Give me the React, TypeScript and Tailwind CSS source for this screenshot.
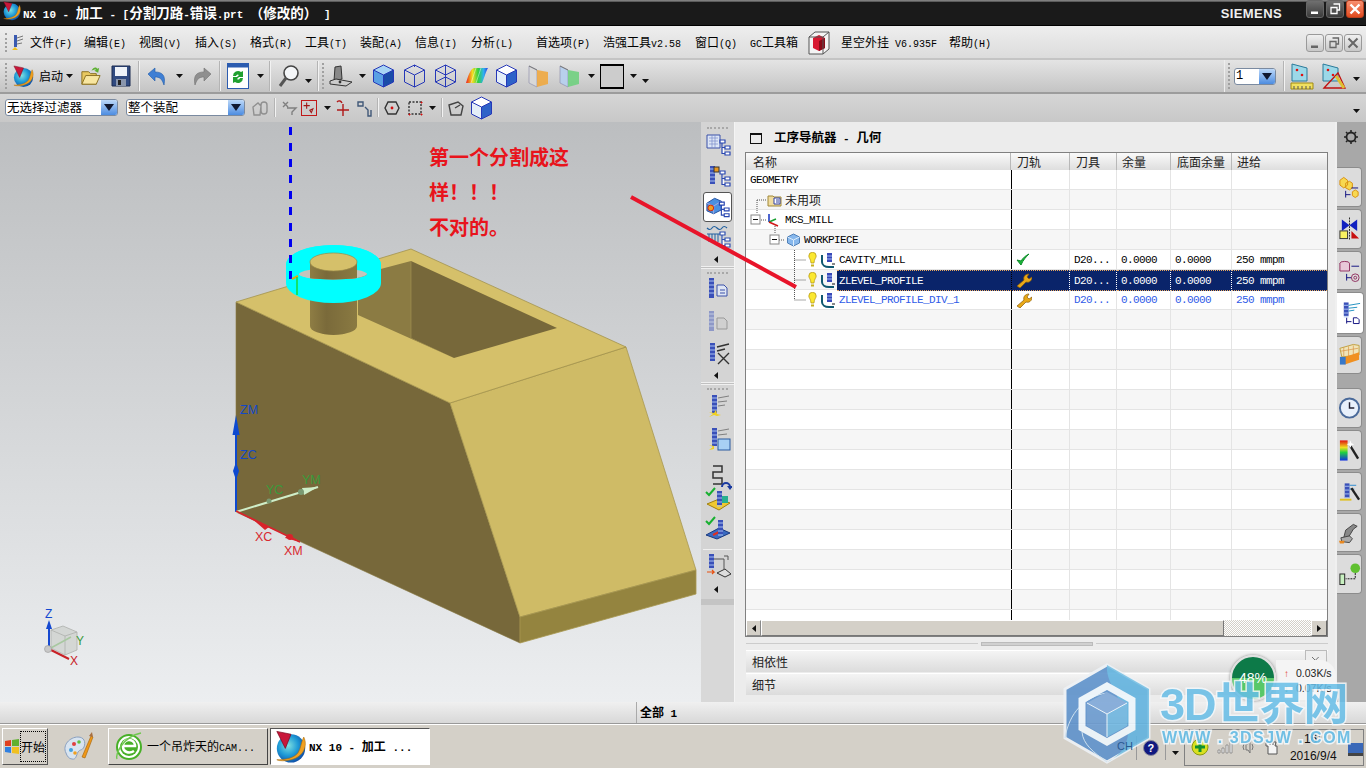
import React from "react";

const CJK = '"Liberation Mono","Noto Sans CJK SC",monospace';
const mixFont = { fontFamily: CJK };

function Mix({ t, latin = "text-[10px]" }: { t: string; latin?: string }) {
  const parts = t.split(/([\x20-\x7e]+)/).filter(Boolean);
  return (
    <>
      {parts.map((p, i) =>
        /^[\x20-\x7e]+$/.test(p) ? (
          <span key={i} className={`${latin} whitespace-pre`}>{p}</span>
        ) : (
          <span key={i} className="font-['Noto_Sans_CJK_SC'] whitespace-pre">{p}</span>
        )
      )}
    </>
  );
}

const Down = ({ className = "" }: { className?: string }) => (
  <svg width="7" height="4" viewBox="0 0 7 4" className={`shrink-0 ${className}`}><path d="M0 0h7L3.5 4z" fill="#111" /></svg>
);
const Grip = ({ className = "" }: { className?: string }) => (
  <div className={`w-[2px] self-stretch my-[3px] shrink-0 border-l-2 border-dotted border-[#a0a0a0] ${className}`} />
);
const Sep = ({ className = "" }: { className?: string }) => (
  <div className={`w-[2px] self-stretch my-[1px] shrink-0 bg-[#f2f2f2] border-l border-[#b4b4b4] ${className}`} />
);

const NX = ({ s = 22, id = "a" }: { s?: number; id?: string }) => (
  <svg width={s} height={s} viewBox="0 0 24 24" className="shrink-0">
    <defs>
      <radialGradient id={`nx${id}`} cx="40%" cy="40%" r="70%"><stop offset="0" stopColor="#7fe0e0" /><stop offset=".5" stopColor="#1e9ad6" /><stop offset="1" stopColor="#0b3d9c" /></radialGradient>
    </defs>
    <circle cx="12" cy="13" r="10" fill={`url(#nx${id})`} />
    <path d="M2 1l10 2-4 10z" fill="#c8173a" stroke="#7a0a20" strokeWidth=".5" />
    <path d="M21 5c3 6 0 14-9 16-4 1-8 1-10 0 6 0 12-1 15-5 2-3 2-7 4-11z" fill="#f0a020" stroke="#a86a08" strokeWidth=".4" />
  </svg>
);
const Folder = () => (
  <svg width="23" height="23" viewBox="0 0 24 24" className="shrink-0">
    <path d="M3 7h7l2 2h6v11H3z" fill="#e8c860" stroke="#8a7020" />
    <path d="M3 20l4-9h15l-4 9z" fill="#f8e6a0" stroke="#8a7020" />
    <path d="M13 6c2-4 5-4 6-2l2-1-1 5-4-2 2-1c-1-1-3 0-5 1z" fill="#5cb030" />
  </svg>
);
const Floppy = () => (
  <svg width="20" height="22" viewBox="0 0 20 22" className="shrink-0">
    <path d="M1 1h18v20H1z" fill="#304a80" stroke="#1a2a50" />
    <path d="M4 2h12v9H4z" fill="#eef2f8" />
    <path d="M5 14h10v7H5z" fill="#8a96ac" /><path d="M7 15h3v5H7z" fill="#222" />
  </svg>
);
const Undo = ({ gray = false }: { gray?: boolean }) => (
  <svg width="22" height="22" viewBox="0 0 22 22" className={`shrink-0 ${gray ? "-scale-x-100" : ""}`}>
    <path d="M2 9l7-6v4c7 0 11 3 9 13-2-6-4-8-9-8v4z" fill={gray ? "#8f8f8f" : "#3f7fd4"} stroke={gray ? "#707070" : "#205aa8"} strokeWidth=".6" />
  </svg>
);
const Update = () => (
  <svg width="22" height="26" viewBox="0 0 22 26" className="shrink-0">
    <rect x=".5" y=".5" width="21" height="25" fill="#fff" stroke="#2c5cb0" /><rect x=".5" y=".5" width="21" height="4" fill="#2c5cb0" />
    <path d="M6 13a5 5 0 018-4l2-1v6h-6l2-2a2 2 0 00-3 1zM16 15a5 5 0 01-8 4l-2 1v-6h6l-2 2a2 2 0 003-1z" fill="#20a030" />
  </svg>
);
const Magnify = () => (
  <svg width="22" height="24" viewBox="0 0 22 24" className="shrink-0">
    <circle cx="13" cy="9" r="7" fill="#f4f6f8" stroke="#444" strokeWidth="1.6" />
    <path d="M8 14l-6 8" stroke="#555" strokeWidth="3" />
  </svg>
);
const Render = () => (
  <svg width="24" height="24" viewBox="0 0 24 24" className="shrink-0">
    <path d="M6 3l6-1 1 13-8 2z" fill="#888" stroke="#333" />
    <path d="M1 17l6-2 16 3-6 4-16-2z" fill="#ccc" stroke="#333" />
    <circle cx="11" cy="18" r="1.4" fill="#333" />
  </svg>
);
const Cube = ({ v }: { v: "shade" | "wire" | "dense" | "edge" }) => {
  const s = "#2638b8";
  return (
    <svg width="23" height="24" viewBox="0 0 23 24" className="shrink-0">
      {v === "shade" && <><path d="M11.5 1l10 5-10 5-10-5z" fill="#a8d4f4" /><path d="M1.5 6l10 5v12l-10-5z" fill="#5aa0e4" /><path d="M21.5 6l-10 5v12l10-5z" fill="#1a4ca8" /></>}
      {v === "edge" && <><path d="M11.5 1l10 5-10 5-10-5z" fill="#ffffff" /><path d="M1.5 6l10 5v12l-10-5z" fill="#e4eef8" /><path d="M21.5 6l-10 5v12l10-5z" fill="#2e62c8" /></>}
      <path d="M11.5 1l10 5v12l-10 5-10-5V6zM1.5 6l10 5 10-5M11.5 11v12" fill="none" stroke={s} strokeWidth="1" />
      {v === "dense" && <path d="M11.5 1v12M1.5 18l10-5 10 5" fill="none" stroke={s} strokeWidth="1" />}
      {v === "wire" && <path d="M11.5 1v2" fill="none" stroke={s} />}
    </svg>
  );
};
const Rainbow = () => (
  <svg width="24" height="22" viewBox="0 0 24 22" className="shrink-0">
    <defs><linearGradient id="rb" x1="0" x2="1"><stop offset="0" stopColor="#f02020" /><stop offset=".3" stopColor="#f0e020" /><stop offset=".55" stopColor="#30d040" /><stop offset=".8" stopColor="#30b0f0" /><stop offset="1" stopColor="#3040e0" /></linearGradient></defs>
    <path d="M1 18C4 8 6 4 9 3l14 0c-2 3-3 8-6 15z" fill="url(#rb)" />
    <path d="M6 18l5-15M11 18l5-15" stroke="#fff" strokeWidth=".7" opacity=".6" />
  </svg>
);
const Paper = ({ green = false }: { green?: boolean }) => (
  <svg width="22" height="26" viewBox="0 0 22 26" className="shrink-0">
    <path d="M2 3l8 4v17l-8-4z" fill={green ? "#b8d0ec" : "#d8d8d8"} stroke="#88a" strokeWidth=".6" />
    <path d="M10 7l11 2v12l-11 3z" fill={green ? "#70d080" : "#f0a840"} opacity=".9" />
    <path d="M2 3l8 4" stroke="#777" />
  </svg>
);
const Combo = ({ t, className = "" }: { t: string; className?: string }) => (
  <div className={`h-[17px] bg-white border border-[#7a8aa0] rounded-[3px] flex items-center shrink-0 overflow-hidden ${className}`}>
    <span className="flex-1 pl-[1px] text-[12.5px] leading-none text-black font-['Noto_Sans_CJK_SC'] whitespace-nowrap">{t}</span>
    <span className="w-[16px] h-full bg-gradient-to-b from-[#bcd8f8] to-[#4c8ce0] flex items-center justify-center">
      <svg width="10" height="7" viewBox="0 0 10 7"><path d="M0 0h10L5 7z" fill="#101830" /></svg>
    </span>
  </div>
);
const Plain = ({ d, c = "#555", s = 18, className = "", dash, children }: { d: string; c?: string; s?: number; className?: string; dash?: string; children?: React.ReactNode }) => (
  <svg width={s} height={s} viewBox="0 0 18 18" className={`shrink-0 ${className}`}><path d={d} fill="none" stroke={c} strokeWidth="1.4" strokeDasharray={dash} />{children}</svg>
);
const WinBtn = ({ k, dark = false, close = false }: { k: "min" | "max" | "x"; dark?: boolean; close?: boolean }) => {
  const bg = close ? "bg-gradient-to-b from-[#f89070] to-[#e04818] border-[#b84020]" : dark ? "bg-gradient-to-b from-[#707070] to-[#3c3c3c] border-[#666]" : "bg-gradient-to-b from-[#f0f0f0] to-[#c8c8c8] border-[#9a9a9a]";
  const c = dark || close ? "#fff" : "#666";
  return (
    <div className={`w-[18px] h-[18px] rounded-[3px] border flex items-center justify-center ${bg}`}>
      <svg width="14" height="14" viewBox="0 0 14 14">
        {k === "min" && <path d="M3 9.5h7v2.5H3z" fill={c} />}
        {k === "max" && <path d="M5.5 2h6v6h-2M3 5.5h6v6H3z" fill="none" stroke={c} strokeWidth="1.3" />}
        {k === "x" && <path d="M2.5 2.5l9 9M11.5 2.5l-9 9" stroke={c} strokeWidth={close ? 2.4 : 2} />}
      </svg>
    </div>
  );
};

const menu: [string, string][] = [
  ["文件(F)", "ml-[6px] w-[54px]"], ["编辑(E)", "w-[55px]"], ["视图(V)", "w-[56px]"], ["插入(S)", "w-[55px]"], ["格式(R)", "w-[55px]"],
  ["工具(T)", "w-[55px]"], ["装配(A)", "w-[55px]"], ["信息(I)", "w-[56px]"], ["分析(L)", "w-[65px]"], ["首选项(P)", "w-[67px]"], ["浩强工具v2.58", "w-[92px]"], ["窗口(Q)", "w-[55px]"], ["GC工具箱", "w-[60px]"],
];

const MenuBar = () => (
  <div style={mixFont} className="h-[34px] shrink-0 flex items-center pl-[5px] pt-[1px] text-[12px] text-black bg-gradient-to-b from-[#eeeeee] to-[#dcdcdc] border-b-2 border-[#c4c4c4]">
    <Grip className="my-[6px]" />
    <svg width="16" height="20" viewBox="0 0 16 20" className="ml-[1px] shrink-0"><path d="M6 2h3v12H6z" fill="#3a5ab0" /><path d="M9 5l6-2M9 8l6-2M9 11l5-1" stroke="#777" /><path d="M7 14l-3 3 6 0z" fill="#f0c020" /></svg>
    {menu.map(([t, c]) => <div key={t} className={`${c} shrink-0 whitespace-nowrap`}><Mix t={t} /></div>)}
    <svg width="22" height="24" viewBox="0 0 22 24" className="shrink-0 -ml-[2px]">
      <path d="M1 6l6-5h14v17l-6 5H1z" fill="#f4f4f4" stroke="#555" /><path d="M5 7l6-3 6 3v10l-6 3-6-3z" fill="#d81830" /><path d="M11 10v10l6-3V7z" fill="#8a0a18" /><path d="M1 6h14v17M15 6l6-5" fill="none" stroke="#555" />
    </svg>
    <div className="ml-[11px] w-[108px] shrink-0 whitespace-nowrap"><Mix t="星空外挂 V6.935F" /></div>
    <div className="shrink-0"><Mix t="帮助(H)" /></div>
    <div className="ml-auto mr-[4px] flex gap-[1px]"><WinBtn k="min" /><WinBtn k="max" /><WinBtn k="x" /></div>
  </div>
);

const Toolbar1 = () => (
  <div className="h-[34px] shrink-0 flex items-center bg-gradient-to-b from-[#e4e4e4] to-[#c4c4c4] border-b-2 border-[#9c9c9c] pl-[5px]">
    <Grip />
    <div className="ml-[5px]"><NX id="t" s={23} /></div>
    <span className="ml-[4px] w-[24px] text-[12px] text-black font-['Noto_Sans_CJK_SC'] shrink-0">启动</span>
    <Down className="ml-[3px]" />
    <div className="ml-[6px]"><Folder /></div>
    <div className="ml-[9px]"><Floppy /></div>
    <Sep className="ml-[7px]" />
    <div className="ml-[6px]"><Undo /></div>
    <Down className="ml-[8px]" />
    <div className="ml-[8px]"><Undo gray /></div>
    <Sep className="ml-[6px]" />
    <div className="ml-[6px]"><Update /></div>
    <Down className="ml-[8px]" />
    <Sep className="ml-[5px]" />
    <div className="ml-[7px]"><Magnify /></div>
    <Down className="ml-[5px] mt-[10px]" />
    <Sep className="ml-[5px]" />
    <Grip className="ml-[3px]" />
    <div className="ml-[5px]"><Render /></div>
    <Down className="ml-[6px]" />
    <div className="ml-[6px]"><Cube v="shade" /></div>
    <div className="ml-[8px]"><Cube v="wire" /></div>
    <div className="ml-[8px]"><Cube v="dense" /></div>
    <div className="ml-[8px]"><Rainbow /></div>
    <div className="ml-[6px]"><Cube v="edge" /></div>
    <div className="ml-[9px]"><Paper /></div>
    <div className="ml-[9px]"><Paper green /></div>
    <Down className="ml-[8px]" />
    <div className="ml-[5px] w-[24px] h-[25px] bg-[#cccccc] border-2 border-black border-x-[1.5px] shrink-0" />
    <Down className="ml-[6px]" />
    <Down className="ml-[5px] mt-[10px]" />
    <div className="ml-auto flex items-center h-full shrink-0 border-l border-[#eee]">
      <Grip className="ml-[3px]" />
      <div className="ml-[4px] w-[42px] h-[17px] bg-white border border-[#7a8aa0] rounded-[3px] flex items-center overflow-hidden">
        <span className="flex-1 pl-[1px] text-[12px] font-['Liberation_Mono'] text-black">1</span>
        <span className="w-[16px] h-full bg-gradient-to-b from-[#bcd8f8] to-[#4c8ce0] flex items-center justify-center"><svg width="10" height="7" viewBox="0 0 10 7"><path d="M0 0h10L5 7z" fill="#101830" /></svg></span>
      </div>
      <Sep className="ml-[7px]" />
      <svg width="26" height="28" viewBox="0 0 26 28" className="ml-[4px] shrink-0"><path d="M3 2l15 4v13H3z" fill="#9cd8e8" stroke="#2a7a9a" /><circle cx="8" cy="8" r="1.3" fill="#e01010" /><circle cx="13" cy="13" r="1.3" fill="#e01010" /><path d="M2 21h22v6H2z" fill="#f0e060" stroke="#a08a10" /><path d="M5 24v3M9 24v3M13 24v3M17 24v3M21 24v3" stroke="#555" /></svg>
      <svg width="26" height="28" viewBox="0 0 26 28" className="ml-[6px] shrink-0"><path d="M2 2l15 4v13H2z" fill="#9cd8e8" stroke="#2a7a9a" /><circle cx="7" cy="8" r="1.3" fill="#e01010" /><circle cx="12" cy="13" r="1.3" fill="#e01010" /><path d="M3 26l14-15 7 15z" fill="none" stroke="#c01010" strokeWidth="1.3" /><path d="M15 14l8 12" stroke="#e0c030" strokeWidth="3" /></svg>
      <Down className="ml-[6px] mr-[6px] mt-[6px]" />
    </div>
  </div>
);

const Toolbar2 = () => (
  <div className="h-[28px] shrink-0 flex items-center bg-gradient-to-b from-[#d6d6d6] to-[#c8c8c8] pl-[5px] pb-[1px]">
    <Combo t="无选择过滤器" className="w-[113px]" />
    <Combo t="整个装配" className="w-[119px] ml-[8px]" />
    <Plain className="ml-[6px]" c="#909090" d="M2 8l5-4 3 3-1 9H3zM10 6a3 3 0 116 0v6a3 3 0 11-6 0z" />
    <Sep className="ml-[5px] my-[4px]" />
    <Plain className="ml-[4px]" c="#808080" d="M3 3l5 5M8 3L3 8M7 9h9l-4 4v3" />
    <div className="ml-[3px] w-[16px] h-[16px] border border-[#c01818] flex items-center justify-center shrink-0"><Plain s={14} c="#a01818" d="M6 2v8M2 6h8M10 12l4-2-2 5z" /></div>
    <Down className="ml-[7px]" />
    <Plain className="ml-[3px]" c="#b01818" d="M9 5v12M3 11h12M3 3c2-2 4-1 5 1" />
    <Plain className="ml-[3px]" c="#405878" d="M3 3h5v4H3zM10 8l3 3v6h3v-6" />
    <Sep className="ml-[4px] my-[4px]" />
    <Plain className="ml-[4px]" c="#333" d="M5 3h8l3 6-3 6H5L2 9z"><circle cx="9" cy="9" r="1.4" fill="#d01010" /></Plain>
    <Plain className="ml-[5px]" c="#333" d="M3 3h12v12H3z" dash="2 1.5"><path d="M15 3h1v1h-1zM15 15h1v1h-1zM3 15h1v1H3z" fill="#d01010" stroke="#d01010" /></Plain>
    <Down className="ml-[5px]" />
    <Sep className="ml-[5px] my-[4px]" />
    <Plain className="ml-[4px]" c="#444" d="M2 6l9-3 5 4-2 9-10 0zM8 9l5-3" />
    <div className="ml-[5px] flex"><Cube v="edge" /></div>
    <Down className="ml-auto mr-[6px] mt-[6px]" />
  </div>
);

const Viewport = () => (
  <svg className="block shrink-0" width="701" height="580" viewBox="0 122 701 580">
    <defs>
      <linearGradient id="bg" x1="0" y1="0" x2="0" y2="1"><stop offset="0" stopColor="#bcbec0" /><stop offset="1" stopColor="#eceef0" /></linearGradient>
      <linearGradient id="cyl" x1="0" x2="1"><stop offset="0" stopColor="#8e7d44" /><stop offset=".35" stopColor="#7a6a3a" /><stop offset="1" stopColor="#8a7a42" /></linearGradient>
      <clipPath id="hole"><ellipse cx="333" cy="274" rx="34" ry="5.5" /></clipPath>
      <filter id="bl"><feGaussianBlur stdDeviation=".35" /></filter>
    </defs>
    <rect x="0" y="122" width="701" height="580" fill="url(#bg)" />
    <path d="M236 302L450 403 520 617V643L236 512z" fill="#77683a" stroke="#8a7b44" strokeWidth=".6" />
    <path d="M450 403L626 347 696 570 520 617z" fill="#cfbb66" stroke="#a89850" strokeWidth=".8" />
    <path d="M520 617L696 570V594L520 643z" fill="#94843f" stroke="#a89850" strokeWidth=".8" />
    <path d="M236 302L411 249 626 347 450 403z" fill="#d5c06a" stroke="#a3934d" strokeWidth=".8" />
    <path d="M358 275L411 261V338L454 358 358 315z" fill="#8b7b43" />
    <path d="M411 261L557 328 454 358 411 338z" fill="#77683a" />
    <path d="M411 261V338" stroke="#a09050" strokeWidth=".7" />
    <path d="M310 262V326A23.5 9 0 00357 326V262z" fill="url(#cyl)" />
    <path d="M286 265A47.5 20 0 01381 265V283A47.5 20 0 01286 283zM299 274A34 5.5 0 00367 274 34 5.5 0 00299 274z" fill="#00ffff" fillRule="evenodd" />
    <path d="M286 265A47.5 20 0 01381 265V274H286z" fill="#00ffff" />
    <path d="M299 274A34 5.5 0 00367 274H299z" fill="#c4c4bc" />
    <path d="M299 274A34 5.500 0 01367 274z" fill="#c4c4bc" />
    <path d="M310 262V285H357V262z" fill="url(#cyl)" clipPath="url(#hole)" />
    <path d="M310 262V271H357V262z" fill="url(#cyl)" />
    <ellipse cx="333.500" cy="262" rx="23.500" ry="9" fill="#d5c06a" stroke="#9a8a48" strokeWidth=".7" />
    <path d="M290.500 127V280" stroke="#0000f0" strokeWidth="3" strokeDasharray="8 8" />
    <path d="M298 276l-6 3" stroke="#e8a810" strokeWidth="2" /><path d="M297 277v18" stroke="#18d838" strokeWidth="1.500" />

    <g filter="url(#bl)">
      <path d="M236 512V430" stroke="#0a4ad0" strokeWidth="2" />
      <path d="M236 415l-3.500 20h7zM236 462l-3 9 3 9 3-9z" fill="#0a4ad0" />
      <path d="M236 512l82-25" stroke="#cfeec8" strokeWidth="2" />
      <path d="M318 487l-16 1 2 7z" fill="#cfeec8" /><circle cx="301" cy="492" r="3" fill="#7a9a72" /><circle cx="269" cy="501" r="2.500" fill="#7a9a72" />
      <path d="M236 511l64 31" stroke="#d8242c" strokeWidth="1.800" />
      <path d="M250 517l19 10-4 3zM300 542l-12-8-3 4z" fill="#d8242c" /><circle cx="290" cy="537" r="3" fill="#d8242c" />
    </g>
    <g fontFamily="'Liberation Sans',sans-serif" fontSize="12.500">
      <text x="240" y="414" fill="#1248c8">ZM</text><text x="240" y="459" fill="#1248c8">ZC</text>
      <text x="266" y="494" fill="#3a9a3a">YC</text><text x="302" y="484" fill="#3a9a3a">YM</text>
      <text x="255" y="541" fill="#d82830">XC</text><text x="284" y="555" fill="#d82830">XM</text>
    </g>
    <g filter="url(#bl)">
      <path d="M51 630l12-4 14 6v18l-12 5-14-7z" fill="#c9ccc8" fillOpacity=".65" stroke="#adb0ac" strokeWidth=".8" />
      <path d="M51 630l14 6 12-4M65 636v19" fill="none" stroke="#adb0ac" strokeWidth=".8" />
      <path d="M49 649l22-12" stroke="#a8c8a0" strokeWidth="1.500" />
      <path d="M49 649V628" stroke="#1248d0" strokeWidth="2" /><path d="M49 620l-3 9h6z" fill="#1248d0" />
      <path d="M49 649l20 10" stroke="#c82028" strokeWidth="2" /><circle cx="48" cy="649" r="3.500" fill="#c8c8c8" stroke="#999" strokeWidth=".6" />
    </g>
    <g fontFamily="'Liberation Sans',sans-serif" fontSize="12">
      <text x="45" y="618" fill="#1248d0">Z</text><text x="76" y="645" fill="#3a9a3a">Y</text><text x="70" y="665" fill="#c82028">X</text>
    </g>
  </svg>
);

const Tree = ({ c = "#2846b0" }: { c?: string }) => (
  <path d="M16 9h5v3h-5zM21 15h5v3h-5zM21 21h5v3h-5zM18 12v10.500h3M18 16.500h3" fill="#fff" stroke={c} strokeWidth="1.200" />
);
const Mill = ({ x = 6, y = 2, h = 17, o = 1 }: { x?: number; y?: number; h?: number; o?: number }) => (
  <g opacity={o}><rect x={x} y={y} width="5" height={h} fill="#3a50b8" /><path d={`M${x} ${y + 3}h5M${x} ${y + 7}h5M${x} ${y + 11}h5M${x} ${y + 15}h5`} stroke="#a8c0f0" strokeWidth="1" /></g>
);
const SI = ({ children, h = "h-[30px]", sel = false }: { children: React.ReactNode; h?: string; sel?: boolean }) => (
  <div className={`${h} shrink-0 flex items-center justify-center ${sel ? "bg-white border border-[#555] rounded-[3px] mx-[2px]" : ""}`}>
    <svg width="28" height="28" viewBox="0 0 28 28">{children}</svg>
  </div>
);
const SGrip = () => <div className="h-[2px] shrink-0 mx-[6px] border-t-2 border-dotted border-[#a8a8a8] mt-[3px]" />;
const Coll = () => (
  <div className="h-[14px] shrink-0 flex items-center pl-[13px]"><svg width="4" height="7" viewBox="0 0 4 7"><path d="M4 0v7L0 3.500z" fill="#111" /></svg></div>
);

const LeftStrip = () => (
  <div className="w-[34px] shrink-0 flex flex-col bg-[#d4d4d4] border-r border-[#f4f4f4] pt-[2px]">
    <SGrip />
    <SI h="h-[31px]"><path d="M3 4h13v13H3z" fill="#dde6f6" stroke="#3a50a8" /><path d="M5 7h9M5 10h9M5 13h9M8 4v13M11 4v13" stroke="#7a8ac8" strokeWidth=".7" /><Tree /></SI>
    <SI h="h-[32px]"><Mill x={6} y={4} h={18} /><rect x="10" y="5" width="5" height="5" fill="#e89820" stroke="#333" /><Tree /></SI>
    <SI sel h="h-[30px]"><path d="M3 10l8-5 7 3v9l-8 4-7-3z" fill="#4a90e0" stroke="#2450a0" /><path d="M3 10l7 3 8-5M10 13v8" stroke="#aad" fill="none" /><circle cx="7" cy="15" r="3" fill="#f0a020" stroke="#d02010" /><Tree /></SI>
    <SI h="h-[30px]"><path d="M3 5q3 3 5 0t5 0 5 0 5 0" fill="none" stroke="#2060a0" strokeWidth="1.200" /><path d="M3 11h14M5 11v8M8 11v8M11 11v8M14 11v8" stroke="#2060a0" /><Tree c="#3050b0" /></SI>
    <Coll />
    <div className="h-[3px] shrink-0 border-t border-b border-[#f0f0f0] bg-[#c0c0c0]" />
    <SGrip />
    <SI h="h-[30px]"><Mill x={5} y={3} h={20} /><path d="M13 10h7l3 3v8H13z" fill="#dfe6f4" stroke="#3a50a8" /><path d="M16 15h5M16 18h5" stroke="#3a50a8" /></SI>
    <SI h="h-[35px]"><Mill x={5} y={3} h={20} o={0.45} /><path d="M13 10h7l3 3v8H13z" fill="#d0d0d0" stroke="#999" /></SI>
    <SI h="h-[29px]"><Mill x={6} y={3} h={18} /><path d="M13 7l12-3M13 11l8-2M14 24l11-11M14 13l11 11" stroke="#333" strokeWidth="1.400" /></SI>
    <Coll />
    <div className="h-[3px] shrink-0 border-t border-b border-[#f0f0f0] bg-[#c0c0c0]" />
    <SGrip />
    <SI h="h-[31px]"><Mill x={8} y={3} h={18} /><path d="M14 6l11-2M14 10l9-1M14 14l7-1" stroke="#808080" /><path d="M10 23l-5 2 4-3-4-2 5 1 2-3 1 4 4 1-4 1z" fill="#f0d020" /></SI>
    <SI h="h-[35px]"><Mill x={8} y={3} h={18} /><path d="M14 6l11-2M14 10l9-1" stroke="#808080" /><rect x="14" y="14" width="12" height="11" fill="#a8d0f4" stroke="#2a5aa0" /><path d="M10 24l-5 1 4-3-4-2 5 1z" fill="#f0d020" /></SI>
    <SI h="h-[42px]"><path d="M9 3h9v6H9v6h9v6H9" fill="none" stroke="#333" strokeWidth="1.500" /><path d="M18 24a4 4 0 018 0" fill="none" stroke="#1a3aa0" strokeWidth="2" /><path d="M26 27l-3-4h6z" fill="#1a3aa0" /></SI>
    <SI h="h-[22px] -mt-[10px]"><path d="M2 7l3 3 6-7" stroke="#18b030" strokeWidth="2" fill="none" /><path d="M3 19l12-5 11 4-11 7z" fill="#f0c830" stroke="#a08010" /><Mill x={13} y={6} h={14} /><path d="M18 11h6v7h-6z" fill="#28b090" /></SI>
    <SI h="h-[36px]"><path d="M2 7l3 3 6-7" stroke="#18b030" strokeWidth="2" fill="none" /><path d="M2 21l13-7 11 5-13 6z" fill="#3a6ac0" stroke="#1a3a80" /><path d="M9 21l8-4" stroke="#e03020" strokeWidth="2" /><Mill x={14} y={6} h={14} /></SI>
    <div className="h-[1px] shrink-0 bg-[#f0f0f0] mx-[2px] mt-[3px]" />
    <SI h="h-[32px]"><Mill x={5} y={2} h={14} /><path d="M10 7h10v10M20 4h4v4" fill="none" stroke="#555" /><path d="M13 21l8-4 6 5-6 3z" fill="#ddd" stroke="#333" /><path d="M3 20h7l-2-2m2 2l-2 2" fill="none" stroke="#e85010" strokeWidth="1.200" /></SI>
    <Coll />
    <div className="h-[6px] shrink-0 bg-[#c4c4c4] mt-[3px]" />
    <div className="flex-1 bg-[#d8d8d8]" />
  </div>
);

const Wrench = () => (
  <svg width="16" height="16" viewBox="0 0 16 16"><path d="M1 14l7-6c-1-3 1-6 5-6l-2 3 2 2 3-2c0 4-3 6-6 5l-6 6z" fill="#e8a818" stroke="#8a5c08" strokeWidth=".7" /></svg>
);
const Bulb = () => (
  <svg width="9" height="16" viewBox="0 0 9 16" className="shrink-0"><path d="M.8 4a3.700 3.700 0 017.400 0c0 2-2 3-2.200 7H3C2.800 7 .8 6 .8 4z" fill="#fbe830" stroke="#b09010" strokeWidth=".7" /><path d="M3 12.500h3v2H3z" fill="#c8b020" /></svg>
);
const OpIcon = () => (
  <svg width="15" height="16" viewBox="0 0 15 16" className="shrink-0 ml-[4px]"><path d="M1 3v7c0 3 3 5 7 5h5" fill="none" stroke="#105870" strokeWidth="2" /><rect x="6" y="1" width="5" height="9" fill="#3848b8" /><path d="M6 4h5M6 7h5" stroke="#a0b8f0" /><path d="M11 12h3" stroke="#111" /></svg>
);

const cols = "grid grid-cols-[265px_59px_47px_54px_61px_95px]";
type Row = { kind: "geo" | "unused" | "mcs" | "wp" | "op" | "empty"; name?: string; state?: "ok" | "wrench"; sel?: boolean; blue?: boolean };
const rows: Row[] = [
  { kind: "geo" }, { kind: "unused" }, { kind: "mcs" }, { kind: "wp" },
  { kind: "op", name: "CAVITY_MILL", state: "ok" },
  { kind: "op", name: "ZLEVEL_PROFILE", state: "wrench", sel: true },
  { kind: "op", name: "ZLEVEL_PROFILE_DIV_1", state: "wrench", blue: true },
  ...Array.from({ length: 16 }, (): Row => ({ kind: "empty" })),
];
const mono = "font-['Liberation_Mono'] text-[11px] tracking-[-0.6px] whitespace-pre pt-[2px]";

const First = ({ r }: { r: Row }) => {
  if (r.kind === "geo") return <div className={`pl-[4px] flex items-center h-full ${mono}`}>GEOMETRY</div>;
  if (r.kind === "unused") return (
    <div className="pl-[21px] flex items-center h-full">
      <svg width="15" height="14" viewBox="0 0 15 14" className="shrink-0"><path d="M1 3h5l1 1h7v9H1z" fill="#f0dca0" stroke="#a08838" /><path d="M7 5h6v6H7z" fill="#fff" stroke="#3040a0" /><path d="M9 7h3M9 9h3" stroke="#3040a0" /></svg>
      <span className="ml-[3px] text-[12px] leading-none font-['Noto_Sans_CJK_SC'] text-[#222]">未用项</span>
    </div>
  );
  if (r.kind === "mcs") return (
    <div className="pl-[21px] flex items-center h-full">
      <svg width="15" height="16" viewBox="0 0 15 16" className="shrink-0"><path d="M2 10V2" stroke="#1030c0" strokeWidth="1.500" /><path d="M2 10l7-3" stroke="#18a030" strokeWidth="1.500" /><path d="M2 10l9 4" stroke="#d01818" strokeWidth="1.500" /></svg>
      <span className={`ml-[3px] ${mono}`}>MCS_MILL</span>
    </div>
  );
  if (r.kind === "wp") return (
    <div className="pl-[40px] flex items-center h-full">
      <svg width="15" height="14" viewBox="0 0 15 14" className="shrink-0"><path d="M7.500 1l6 3v6l-6 3-6-3V4z" fill="#88b8ec" stroke="#5080b8" /><path d="M1.500 4l6 3 6-3M7.500 7v6" fill="none" stroke="#dcecfa" /></svg>
      <span className={`ml-[3px] ${mono}`}>WORKPIECE</span>
    </div>
  );
  if (r.kind === "op") return (
    <div className="pl-[62px] flex items-center h-full">
      <Bulb /><OpIcon />
      <span className={`ml-[1px] pl-[2px] flex-1 h-full flex items-center ${mono} ${r.sel ? "bg-[#0a246a] text-white border-y border-dotted border-[#e8a860]" : r.blue ? "text-[#2f5ce8]" : "text-black"}`}>{r.name}</span>
    </div>
  );
  return null;
};

const Table = () => (
  <div className="ml-[10px] w-[583px] h-[485px] border border-[#808080] bg-white shrink-0 flex flex-col overflow-hidden">
    <div className={`${cols} h-[17px] shrink-0 bg-gradient-to-b from-[#fafafa] to-[#dedede] text-[12px] leading-[17px] font-['Noto_Sans_CJK_SC'] text-[#222]`}>
      <div className="pl-[7px] border-r border-[#b8b8b8]">名称</div>
      <div className="pl-[6px] border-r border-[#b8b8b8]">刀轨</div>
      <div className="pl-[6px] border-r border-[#b8b8b8]">刀具</div>
      <div className="pl-[5px] border-r border-[#b8b8b8]">余量</div>
      <div className="pl-[6px] border-r border-[#b8b8b8]">底面余量</div>
      <div className="pl-[5px]">进给</div>
    </div>
    <div className="relative h-[450px] shrink-0 overflow-hidden">
      {rows.map((r, i) => {
        const hasData = r.kind === "op";
        const tone = r.sel ? "bg-[#0a246a] text-white border-y border-dotted border-[#e8a860]" : r.blue ? "text-[#2f5ce8]" : "text-black";
        const line = r.sel ? "border-r border-r-white" : "border-r border-r-[#e4e4e4]";
        return (
          <div key={i} className={`${cols} h-[20px] border-b border-[#e4e4e4] ${i % 2 ? "bg-[#f6f6f6]" : "bg-white"}`}>
            <div className="h-full"><First r={r} /></div>
            <div className={`border-l border-black flex items-center pl-[4px] ${line} ${r.sel ? "bg-[#0a246a] border-y border-dotted border-y-[#e8a860]" : ""}`}>
              {r.state === "ok" && <svg width="14" height="13" viewBox="0 0 14 13"><path d="M1 7l4 5c2-5 5-8 8-11-4 2-6 4-8 7z" fill="#18b838" stroke="#0c8a28" strokeWidth="1" /></svg>}
              {r.state === "wrench" && <Wrench />}
            </div>
            <div className={`${line} ${mono} pl-[4px] flex items-center ${hasData ? tone : ""}`}>{hasData ? "D20..." : ""}</div>
            <div className={`${line} ${mono} pl-[4px] flex items-center ${hasData ? tone : ""}`}>{hasData ? "0.0000" : ""}</div>
            <div className={`${line} ${mono} pl-[4px] flex items-center ${hasData ? tone : ""}`}>{hasData ? "0.0000" : ""}</div>
            <div className={`${mono} pl-[4px] flex items-center ${hasData ? tone : ""}`}>{hasData ? "250 mmpm" : ""}</div>
          </div>
        );
      })}
      <svg className="absolute left-0 top-0 pointer-events-none" width="70" height="140" viewBox="746 170 70 140">
        <path d="M757 200h10M757 200v14M761 220h6M775 226v8M779 240h6M794.500 250v50M794.500 260h12M794.500 280h12M794.500 300h12" fill="none" stroke="#555" strokeDasharray="1 1" />
        <rect x="751" y="215" width="9" height="9" fill="#fff" stroke="#888" /><path d="M753 219.500h5" stroke="#111" />
        <rect x="770" y="235" width="9" height="9" fill="#fff" stroke="#888" /><path d="M772 239.500h5" stroke="#111" />
      </svg>
    </div>
    <div className="h-[16px] shrink-0 flex bg-[repeating-conic-gradient(#d4d0c8_0_25%,#ffffff_0_50%)] bg-[length:2px_2px]">
      <div className="w-[15px] bg-[#d4d0c8] border border-[#888] border-t-white border-l-white flex items-center justify-center"><svg width="4" height="7" viewBox="0 0 4 7"><path d="M4 0v7L0 3.500z" fill="#111" /></svg></div>
      <div className="w-[463px] bg-[#d4d0c8] border border-[#777] border-t-white border-l-white" />
      <div className="flex-1" />
      <div className="w-[16px] bg-[#d4d0c8] border border-[#666] border-t-white border-l-white flex items-center justify-center"><svg width="4" height="7" viewBox="0 0 4 7"><path d="M0 0v7L4 3.500z" fill="#111" /></svg></div>
    </div>
  </div>
);

const Section = ({ t }: { t: string }) => (
  <div className="h-[22px] flex items-center pl-[6px] bg-gradient-to-b from-[#f4f4f4] to-[#dcdcdc] border-t border-[#fff] text-[12px] font-['Noto_Sans_CJK_SC'] text-[#222] shrink-0">{t}</div>
);

const Panel = () => (
  <div className="w-[600px] shrink-0 bg-[#ececec] flex flex-col">
    <div className="h-[30px] shrink-0 flex items-center pl-[15px] pt-[3px]">
      <div className="w-[12px] h-[11px] border border-[#111] border-t-2 shrink-0" />
      <span className="ml-[12px] text-[12.500px] font-bold text-black" style={mixFont}><Mix t="工序导航器 - 几何" latin="text-[11px]" /></span>
    </div>
    <Table />
    <div className="h-[13px] shrink-0 flex items-center ml-[11px] w-[582px]">
      <div className="h-[1px] flex-1 bg-[#ccc]" />
      <div className="w-[112px] h-[4px] bg-[#d0d0d0] border border-[#bbb] mx-[3px]" />
      <div className="h-[1px] flex-1 bg-[#ccc]" />
    </div>
    <div className="ml-[11px] w-[582px] flex flex-col gap-[1px]">
      <div className="relative"><Section t="相依性" />
        <div className="absolute right-[1px] top-0 w-[22px] h-[22px] border border-[#bbb] bg-[#eee] flex items-center justify-center"><Plain s={12} c="#666" d="M3 3l5 5 5-5M3 9l5 5 5-5" /></div>
      </div>
      <Section t="细节" />
    </div>
  </div>
);

const Tab = ({ children, h = "h-[40px]", sel = false }: { children: React.ReactNode; h?: string; sel?: boolean }) => (
  <div className={`${h} shrink-0 rounded-r-[4px] rounded-l-none border border-l-0 border-[#8c8c8c] flex items-center justify-center ${sel ? "bg-white w-[27px]" : "bg-[#dcdcdc] w-[25px]"}`}>
    <svg width="23" height="24" viewBox="0 0 24 24">{children}</svg>
  </div>
);

const RightStrip = () => (
  <div className="w-[31px] shrink-0 bg-[#a8a8a8] flex flex-col border-l-2 border-[#f0f0f0]">
    <div className="h-[45px] shrink-0 flex items-center justify-center pb-[15px] pr-[2px]">
      <svg width="14" height="14" viewBox="0 0 14 14"><circle cx="7" cy="7" r="4.500" fill="none" stroke="#222" strokeWidth="1.800" /><path d="M7 0v2M7 12v2M0 7h2M12 7h2M2 2l1.500 1.500M10.500 10.500L12 12M12 2l-1.500 1.500M3.500 10.500L2 12" stroke="#222" strokeWidth="1.500" /></svg>
    </div>
    <div className="flex flex-col gap-[2px]">
      <Tab><path d="M2 5l4-3 4 3v5l-4 3-4-3zM8 8l4-2 3 2v5l-3 2-4-2z" fill="#f8d850" stroke="#d89010" /><path d="M8 16v7M8 20h5M14 13h7" stroke="#101080" fill="none" /><path d="M15 17l3-2 3 2v4l-3 2-3-2z" fill="#f8d850" stroke="#d89010" /></Tab>
      <Tab><path d="M4 2l8 6-8 6zM20 2l-8 6 8 6z" fill="#1020c0" /><path d="M12 0v24" stroke="#222" strokeDasharray="2 1" /><rect x="2" y="14" width="8" height="8" fill="#f8f060" stroke="#333" /><path d="M14 14l8 8h-8z" fill="#c81010" /></Tab>
      <Tab h="h-[39px]"><ellipse cx="7" cy="4" rx="5" ry="2" fill="#e8c8d8" stroke="#903060" /><path d="M2 4v8h10V4" fill="#e8c8d8" stroke="#903060" /><path d="M14 7h8M9 15v7M9 19h5" stroke="#101080" fill="none" /><circle cx="18" cy="19" r="4" fill="none" stroke="#903060" /><circle cx="18" cy="19" r="1.500" fill="none" stroke="#903060" /></Tab>
      <Tab h="h-[42px]" sel><Mill x={5} y={1} h={14} /><path d="M10 4l12-2M10 7l9-1M10 10l6-1" stroke="#2090c0" /><path d="M8 17v6M8 21h5M15 17h4l2 2v4h-6z" fill="none" stroke="#101080" /></Tab>
      <Tab h="h-[38px]"><path d="M2 5l14-4 6 1v10L4 14z" fill="#f0e4b8" stroke="#c0a040" /><path d="M6 4v9M11 3v10M16 2v10M3 8l18-3" stroke="#d89040" strokeWidth=".7" /><path d="M7 14l15-5v8L7 22z" fill="#f09020" /><path d="M2 14h6v8H2z" fill="#3878c8" /></Tab>
    </div>
    <div className="h-[14px] shrink-0" />
    <div className="flex flex-col gap-[2px]">
      <Tab><circle cx="12" cy="12" r="10" fill="#e8f0fb" stroke="#4a6a9a" strokeWidth="2" /><path d="M12 6v6h5" stroke="#223" strokeWidth="1.500" fill="none" /></Tab>
      <Tab><defs><linearGradient id="rn" x1="0" y1="0" x2="0" y2="1"><stop offset="0" stopColor="#e01010" /><stop offset=".35" stopColor="#f0e020" /><stop offset=".6" stopColor="#20d040" /><stop offset="1" stopColor="#1030e0" /></linearGradient></defs><rect x="2" y="2" width="8" height="21" fill="url(#rn)" /><path d="M13 8l8 13" stroke="#222" strokeWidth="2.500" /><path d="M13 2l1 3 3 1-3 1-1 3-1-3-3-1 3-1z" fill="#fff" /></Tab>
      <Tab h="h-[39px]"><Mill x={7} y={3} h={15} /><path d="M12 5h7M12 9h5" stroke="#2a8ad0" /><path d="M2 20h12" stroke="#e0c020" strokeWidth="2" /><path d="M14 8l8 12" stroke="#222" strokeWidth="2.500" /></Tab>
      <Tab h="h-[39px]"><path d="M8 9l8-6 4 2-4 3-6 10-4-1z" fill="#888" stroke="#444" /><path d="M3 17l9-2 3 3-3 4-8-1z" fill="#aaa" stroke="#444" /><path d="M1 20h6l-1 3H2z" fill="#e88820" /></Tab>
      <Tab h="h-[40px]"><rect x="2" y="12" width="5" height="11" fill="#c8f0c0" stroke="#222" /><circle cx="18" cy="6" r="5" fill="#60c030" /><path d="M18 11v6H8" fill="none" stroke="#111" strokeDasharray="2 1" /></Tab>
    </div>
  </div>
);

const Task = ({ className, children }: { className: string; children: React.ReactNode }) => (
  <div className={`h-[37px] shrink-0 flex items-center overflow-hidden ${className}`}>{children}</div>
);

const Taskbar = () => (
  <div className="h-[43px] shrink-0 bg-[#d4d0c8] border-t border-white flex items-center pl-[2px] pt-[1px] relative">
    <Task className="w-[46px] border border-t-white border-l-white border-[#555] pl-[1px]">
      <svg width="16" height="16" viewBox="0 0 16 16" className="shrink-0"><path d="M1 2l6-1v6H1z" fill="#e04020" /><path d="M8 1l7-1v7H8z" fill="#60b030" /><path d="M1 8h6v6l-6-1z" fill="#3080e0" /><path d="M8 8h7v7l-7-1z" fill="#f0c020" /></svg>
      <span className="shrink-0 w-[26px] h-[31px] border border-dotted border-black flex items-center whitespace-nowrap text-[12px] text-black font-['Noto_Sans_CJK_SC'] leading-none">开始</span>
    </Task>
    <div className="w-[60px] shrink-0 flex items-center justify-center">
      <svg width="32" height="32" viewBox="0 0 32 32"><path d="M4 22C0 14 8 6 16 6c6 0 8 5 6 10-2 4-4 2-6 5-2 4-2 8-6 7-3 0-5-3-6-6z" fill="#d8e4f0" stroke="#8aa0c0" /><circle cx="12" cy="13" r="2" fill="#e04040" /><circle cx="9" cy="19" r="2" fill="#40a0e0" /><circle cx="17" cy="11" r="1.800" fill="#60c040" /><circle cx="13" cy="22" r="1.800" fill="#f0a020" /><path d="M20 26L29 5l2 1-8 21z" fill="#f09818" stroke="#a06008" strokeWidth=".6" /><path d="M27 5l3-4 1 5z" fill="#a87040" /></svg>
    </div>
    <Task className="w-[160px] border border-t-white border-l-white border-[#444] pl-[5px]">
      <svg width="30" height="32" viewBox="0 0 30 32" className="shrink-0"><circle cx="15" cy="16" r="12" fill="#fff" stroke="#48b028" strokeWidth="2" /><circle cx="15" cy="16" r="9" fill="#48b028" /><path d="M9 15h12v-1a6 6 0 00-12 2c0 5 6 7 11 4" fill="none" stroke="#fff" strokeWidth="2.500" /><path d="M3 28C1 24 8 6 27 2" fill="none" stroke="#70c850" strokeWidth="1.400" /></svg>
      <span className="ml-[3px] text-[12px] text-black whitespace-nowrap" style={mixFont}><Mix t="一个吊炸天的CAM..." /></span>
    </Task>
    <Task className="ml-[2px] w-[160px] bg-white border border-t-[#555] border-l-[#555] border-white pl-[3px]">
      <NX id="k" s={34} />
      <span className="ml-[1px] text-[12px] font-bold text-black whitespace-pre" style={mixFont}><Mix t="NX 10 - 加工 ..." latin="text-[11px]" /></span>
    </Task>
  </div>
);

const Tray = () => (
  <div className="absolute left-[1136px] top-[725px] h-[40px] w-[228px] flex items-center">
    <div className="w-[1px] h-[24px] bg-[#999] mt-[6px]" />
    <svg width="16" height="16" viewBox="0 0 16 16" className="ml-[6px] mt-[6px]"><circle cx="8" cy="8" r="7.500" fill="#101880" stroke="#889" /><text x="8" y="12" textAnchor="middle" fontSize="11" fontWeight="700" fill="#fff" fontFamily="'Liberation Sans'">?</text></svg>
    <div className="ml-[6px] w-[1px] h-[24px] bg-[#999] mt-[6px]" />
    <Down className="ml-[6px] mt-[16px]" />
    <div className="ml-[5px] w-[181px] h-[37px] border border-[#808080] flex items-center relative mt-[4px]">
      <svg width="18" height="18" viewBox="0 0 18 18" className="ml-[6px]"><circle cx="9" cy="9" r="8" fill="#d8e020" stroke="#8a9a10" /><path d="M9 4v10M4 9h10" stroke="#109030" strokeWidth="3" /></svg>
      <svg width="17" height="14" viewBox="0 0 17 14" className="ml-[8px]"><path d="M1 13h2v-3H1zM5 13h2V8H5zM9 13h2V5H9zM13 13h2V1h-2z" fill="#f4f4f4" stroke="#777" strokeWidth=".7" /></svg>
      <svg width="17" height="14" viewBox="0 0 17 14" className="ml-[6px]"><path d="M6 4h2l2-3v12l-2-3H6zM12 4q2 3 0 6M4 4q-2 3 0 6" fill="none" stroke="#777" /></svg>
      <svg width="14" height="15" viewBox="0 0 14 15" className="ml-[8px]"><path d="M1 2h10l-1 4h2v8H3V6H1z" fill="#f4f4f4" stroke="#555" /><path d="M5 2v3M8 2v3" stroke="#555" /></svg>
      <div className="absolute left-[119px] top-[1px] text-[12px] leading-[17px] text-[#111] font-['Liberation_Sans']">16:</div>
      <div className="absolute left-[105px] top-[18px] text-[12px] leading-[17px] text-[#111] font-['Liberation_Sans']">2016/9/4</div>
      <svg width="15" height="13" viewBox="0 0 15 13" className="absolute left-[163px] top-[13px]"><rect x="0" y="0" width="15" height="10" fill="#3a68b8" /><rect x="0" y="10" width="15" height="3" fill="#444" /></svg>
    </div>
  </div>
);

const Watermark = () => (
  <>
    <div className="absolute left-[1276px] top-[660px] w-[60px] h-[40px] rounded-r-[16px] bg-[#f4f4f4] text-[10.500px] leading-[15px] font-['Liberation_Sans'] text-[#222] pt-[6px] pl-[8px]">
      <div className="flex items-center whitespace-pre"><span className="text-[#e04030] text-[10px] mr-[7px]">↑</span>0.03K/s</div>
      <div className="flex items-center whitespace-pre"><span className="text-[#30a050] text-[10px] mr-[7px]">↓</span>0.07K/s</div>
    </div>
    <div className="absolute left-[1230px] top-[655px] w-[46px] h-[46px] rounded-full border-2 border-[#e0e0e0] bg-gradient-to-b from-[#0d7a48] from-50% to-[#58c868] to-50% flex items-center justify-center text-[14px] text-white font-['Liberation_Sans'] shadow-[0_0_3px_#888]">48%</div>
    <svg className="absolute left-[1060px] top-[660px] opacity-90" width="96" height="108" viewBox="0 0 96 108">
      <path d="M47 5l42 24v49L47 102 5 78V29z" fill="#5f93cc" stroke="#eef2f6" strokeWidth="3" />
      <path d="M47 5l42 24v49L47 102c18-8 24-25 20-40C62 38 45 22 47 5z" fill="#63b8e2" fillOpacity=".85" />
      <path d="M5 78c4-25 20-42 42-45M47 102c-14-10-24-18-25-30" fill="none" stroke="#cfe4f4" strokeWidth="1" />
      <path d="M47 26l25 14v28L47 82 22 68V40z" fill="none" stroke="#eef6fc" strokeWidth="7" />
      <path d="M47 32l20 11-20 11-20-11z" fill="#7fa8d8" />
      <path d="M27 43l20 11v23L27 66z" fill="#6b9bd0" /><path d="M67 43L47 54v23l20-11z" fill="#6fb6e0" />
      <path d="M47 54v23M27 43l20 11 20-11" stroke="#eef6fc" fill="none" />
    </svg>
    <div className="absolute left-[1117px] top-[738px] text-[11px] text-[#2a5a90] font-['Liberation_Sans']">CH</div>
    <div className="absolute left-[1160px] top-[674px] opacity-85 text-[45px] leading-[62px] font-bold whitespace-pre text-[#66bee8] font-['Liberation_Sans','Noto_Sans_CJK_SC',sans-serif] [-webkit-text-stroke:3px_#f4f8fb] [paint-order:stroke_fill] tracking-[-1px]">3D世界网</div>
    <div className="absolute left-[1162px] top-[727px] opacity-90 text-[16px] leading-[22px] font-bold whitespace-pre text-[#66bee8] font-['Liberation_Sans'] [-webkit-text-stroke:3px_#f4f8fb] [paint-order:stroke_fill] tracking-[1.500px]">WWW . 3DSJW . COM</div>
  </>
);

export default function App() {
  return (
    <div className="relative w-[1366px] h-[768px] overflow-hidden flex flex-col bg-[#d4d0c8] select-none">
      <div className="h-[26px] shrink-0 flex flex-col">
        <div className="h-[6px] bg-gradient-to-b from-[#909090] to-[#4c4c4c]" />
        <div className="flex-1 bg-[#1a1a1a] flex items-center pl-[2px] border-b border-black relative">
          <div className="-mt-[5px]"><NX id="h" s={20} /></div>
          <span style={mixFont} className="ml-[1px] text-[13.5px] font-bold text-white whitespace-pre"><Mix t="NX 10 - 加工 - [分割刀路-错误.prt （修改的） ]" latin="text-[11px]" /></span>
          <span className="ml-auto mr-[84px] text-[13px] font-bold tracking-[0.4px] text-[#f0f0f0] font-['Liberation_Sans']">SIEMENS</span>
          <div className="absolute right-[2px] top-[-2px] flex gap-[2px]"><WinBtn k="min" dark /><WinBtn k="max" dark /><WinBtn k="x" close /></div>
        </div>
      </div>
      <MenuBar />
      <Toolbar1 />
      <Toolbar2 />
      <div className="h-[580px] shrink-0 flex">
        <Viewport />
        <LeftStrip />
        <Panel />
        <RightStrip />
      </div>
      <div className="h-[22px] shrink-0 flex bg-gradient-to-b from-[#f0f0f0] to-[#d8d8d8] border-b border-[#999]">
        <div className="ml-[636px] pl-[3px] border-l border-[#aaa] text-[12px] font-bold text-black whitespace-pre leading-[20px]" style={mixFont}><Mix t="全部 1" latin="text-[11px]" /></div>
      </div>
      <Taskbar />
      <Tray />
      <Watermark />
      <div className="absolute left-[429px] top-[139px] w-[160px] text-[20px] leading-[35px] font-bold text-[#e8141c] font-['Noto_Sans_CJK_SC']">
        第一个分割成这<br />样！！！<br />不对的。
      </div>
      <svg className="absolute left-[625px] top-[190px]" width="180" height="105" viewBox="625 190 180 105"><path d="M631 197L796 287" stroke="#e8142a" strokeWidth="4" /></svg>
    </div>
  );
}
